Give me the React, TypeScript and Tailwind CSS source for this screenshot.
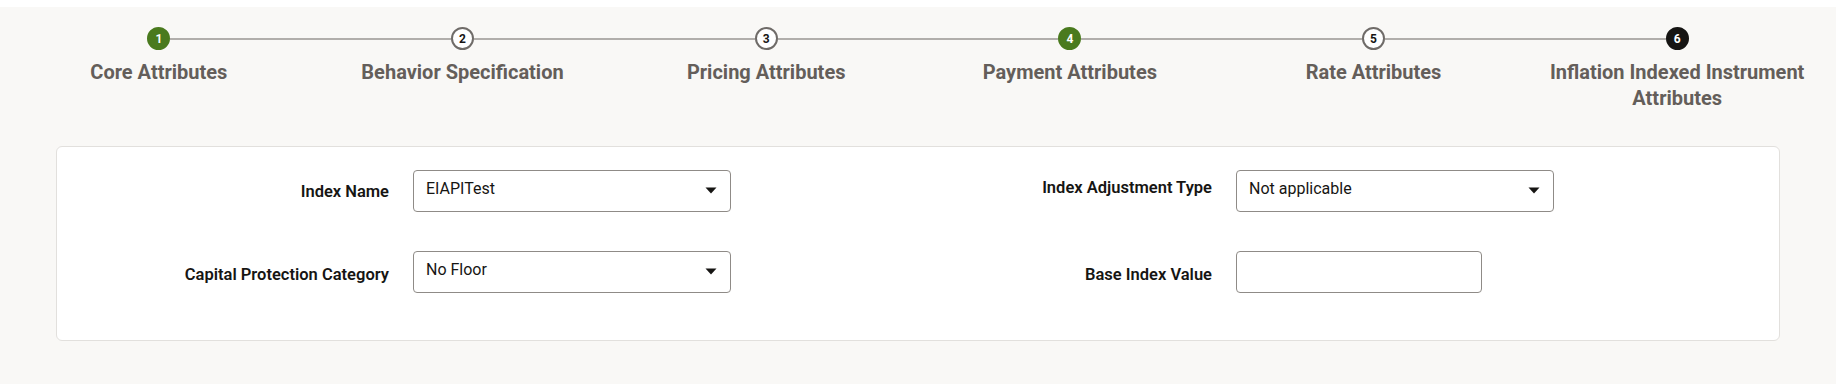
import React from 'react';

type Step = { label: string; state: 'done' | 'todo' | 'current' };

const steps: Step[] = [
  { label: 'Core Attributes', state: 'done' },
  { label: 'Behavior Specification', state: 'todo' },
  { label: 'Pricing Attributes', state: 'todo' },
  { label: 'Payment Attributes', state: 'done' },
  { label: 'Rate Attributes', state: 'todo' },
  { label: 'Inflation Indexed Instrument Attributes', state: 'current' },
];

const font = { fontFamily: 'Roboto, "Noto Sans", sans-serif' };

function Circle({ n, state }: { n: number; state: Step['state'] }) {
  const cls =
    state === 'done'
      ? 'bg-[#4a7a1e] text-white border-[#4a7a1e]'
      : state === 'current'
      ? 'bg-[#161513] text-white border-[#161513]'
      : 'bg-white text-[#161513] border-[#6f6b68]';
  return (
    <div
      className={`flex h-[23px] w-[23px] shrink-0 items-center justify-center rounded-full border-2 text-[12px] font-bold leading-none ${cls}`}
    >
      {n}
    </div>
  );
}

function Caret() {
  return (
    <svg width="12" height="7" viewBox="0 0 12 7" className="mb-[2px] shrink-0">
      <path d="M0.5 0.5 H11.5 L6 6.5 Z" fill="#161513" />
    </svg>
  );
}

function SelectBox({ value, width }: { value: string; width: string }) {
  return (
    <div
      className={`flex h-[42px] ${width} items-center justify-between rounded-[4px] border border-[#8f8b87] bg-white pl-[12px] pr-[13px] text-[16px] text-[#161513]`}
    >
      <span className="mb-[4px]">{value}</span>
      <Caret />
    </div>
  );
}

function Label({ children, className = '' }: { children: React.ReactNode; className?: string }) {
  return (
    <div className={`text-right text-[16.5px] font-semibold text-[#161513] ${className}`}>{children}</div>
  );
}

export default function App() {
  return (
    <div className="min-h-screen bg-[#f9f8f6]" style={font}>
      <div className="h-[7px] bg-white" />

      <div className="flex px-[7px] pt-[20px]">
        {steps.map((step, i) => (
          <div key={step.label} className="flex flex-1 flex-col items-center">
            <div className="flex w-full items-center">
              <div className={`h-[2px] flex-1 ${i === 0 ? '' : 'bg-[#b1aeab]'}`} />
              <Circle n={i + 1} state={step.state} />
              <div className={`h-[2px] flex-1 ${i === steps.length - 1 ? '' : 'bg-[#b1aeab]'}`} />
            </div>
            <div className="mt-[9px] max-w-[290px] text-center text-[20px] font-bold leading-[26px] text-[#645e5a]">
              {step.label}
            </div>
          </div>
        ))}
      </div>

      <div className="mx-[56px] mt-[35px] h-[195px] rounded-[6px] border border-[#e2e0dd] bg-white pl-[24px] pt-[23px]">
        <div className="grid grid-cols-[308px_318px_457px_318px] items-center gap-x-6 gap-y-[39px]">
          <Label className="mt-[2px]">Index Name</Label>
          <SelectBox value="EIAPITest" width="w-[318px]" />
          <Label className="mb-[6px]">Index Adjustment Type</Label>
          <SelectBox value="Not applicable" width="w-[318px]" />

          <Label className="mt-[6px]">Capital Protection Category</Label>
          <SelectBox value="No Floor" width="w-[318px]" />
          <Label className="mt-[6px]">Base Index Value</Label>
          <div className="h-[42px] w-[246px] rounded-[4px] border border-[#8f8b87] bg-white" />
        </div>
      </div>
    </div>
  );
}
